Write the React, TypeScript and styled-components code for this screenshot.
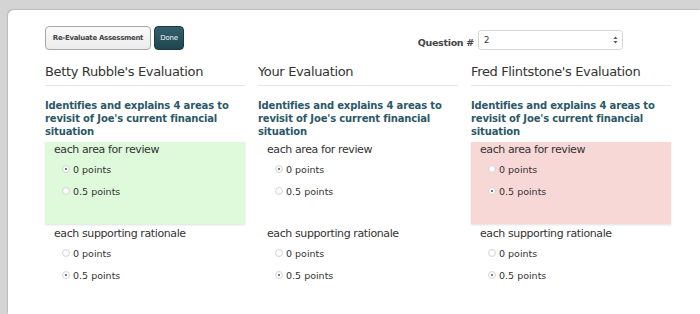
import React from 'react';
import styled, { createGlobalStyle } from 'styled-components';

const font = '"DejaVu Sans", "Liberation Sans", sans-serif';

const GlobalStyle = createGlobalStyle`
  html, body {
    margin: 0;
    padding: 0;
    background: #d4d4d4;
    overflow: hidden;
  }
  body {
    font-family: ${font};
    color: #333;
  }
`;

type Tone = 'good' | 'bad';

interface Option {
  label: string;
  checked: boolean;
}

interface Criterion {
  title: string;
  options: Option[];
}

interface Evaluation {
  name: string;
  tone?: Tone;
  criteria: Criterion[];
}

const pick = (i: number) => [
  { label: '0 points', checked: i === 0 },
  { label: '0.5 points', checked: i === 1 },
];

const evaluations: Evaluation[] = [
  {
    name: "Betty Rubble's Evaluation",
    tone: 'good',
    criteria: [
      { title: 'each area for review', options: pick(0) },
      { title: 'each supporting rationale', options: pick(1) },
    ],
  },
  {
    name: 'Your Evaluation',
    criteria: [
      { title: 'each area for review', options: pick(0) },
      { title: 'each supporting rationale', options: pick(1) },
    ],
  },
  {
    name: "Fred Flintstone's Evaluation",
    tone: 'bad',
    criteria: [
      { title: 'each area for review', options: pick(1) },
      { title: 'each supporting rationale', options: pick(1) },
    ],
  },
];

const App: React.FC = () => {
  return (
    <>
      <GlobalStyle />
      <Page>
        <Card>
          <Toolbar>
            <ButtonGroup>
              <LightButton>Re-Evaluate Assessment</LightButton>
              <DarkButton>Done</DarkButton>
            </ButtonGroup>
            <QuestionPicker>
              <QuestionLabel>Question #</QuestionLabel>
              <Select>
                <span>2</span>
                <SelectArrows>
                  <svg width="5" height="8" viewBox="0 0 5 8">
                    <path d="M2.5 0.5 L4.5 3 L0.5 3 Z M2.5 7.5 L4.5 5 L0.5 5 Z" fill="#555" />
                  </svg>
                </SelectArrows>
              </Select>
            </QuestionPicker>
          </Toolbar>
          <Columns>
            {evaluations.map((ev) => (
              <Column key={ev.name}>
                <Heading>{ev.name}</Heading>
                <Prompt>Identifies and explains 4 areas to revisit of Joe's current financial situation</Prompt>
                {ev.criteria.map((c, ci) => (
                  <CriterionBox key={c.title} $first={ci === 0} $tone={ci === 0 ? ev.tone : undefined}>
                    <CriterionTitle>{c.title}</CriterionTitle>
                    {c.options.map((o) => (
                      <RadioRow key={o.label}>
                        <Radio $checked={o.checked} />
                        <RadioLabel>{o.label}</RadioLabel>
                      </RadioRow>
                    ))}
                  </CriterionBox>
                ))}
              </Column>
            ))}
          </Columns>
        </Card>
      </Page>
    </>
  );
};

export default App;

const Page = styled.div`
  height: 314px;
  padding: 10px 0 0 8px;
  box-sizing: border-box;
  overflow: hidden;
`;

const Card = styled.div`
  width: 692px;
  height: 304px;
  background: #fff;
  border-radius: 6px 0 0 0;
  box-shadow: -1px -1px 1px rgba(0, 0, 0, 0.12);
  padding: 16px 0 0 37px;
  box-sizing: border-box;
`;

const Toolbar = styled.div`
  width: 578px;
  display: flex;
  align-items: flex-start;
  justify-content: space-between;
`;

const ButtonGroup = styled.div`
  display: flex;
  gap: 3px;
`;

const ButtonBase = styled.button`
  height: 24px;
  padding: 0;
  border-radius: 4px;
  font-family: ${font};
  font-size: 7px;
  font-weight: bold;
  white-space: nowrap;
  cursor: pointer;
`;

const LightButton = styled(ButtonBase)`
  width: 106px;
  letter-spacing: -0.3px;
  background: linear-gradient(#fafafa, #ececec);
  border: 1px solid #a8a8a8;
  color: #444;
`;

const DarkButton = styled(ButtonBase)`
  width: 30px;
  letter-spacing: -0.2px;
  background: linear-gradient(#33606b, #1f4650);
  border: 1px solid #183a42;
  color: #f2f6f7;
  font-weight: normal;
`;

const QuestionPicker = styled.div`
  display: flex;
  align-items: center;
  gap: 4px;
  margin-top: 4px;
`;

const QuestionLabel = styled.span`
  font-size: 9.5px;
  letter-spacing: -0.3px;
  font-weight: bold;
  color: #444;
  margin-top: 4px;
`;

const Select = styled.div`
  width: 145px;
  height: 20px;
  box-sizing: border-box;
  border: 1px solid #d8d8d8;
  border-radius: 3px;
  display: flex;
  align-items: center;
  justify-content: space-between;
  padding: 0 4px 0 5px;
  font-size: 8.5px;
  color: #333;
`;

const SelectArrows = styled.span`
  display: flex;
`;

const Columns = styled.div`
  display: flex;
  gap: 13px;
  margin-top: 12px;
`;

const Column = styled.div`
  width: 200px;
`;

const Heading = styled.div`
  font-size: 13px;
  letter-spacing: -0.35px;
  line-height: 20px;
  padding-bottom: 3px;
  border-bottom: 1px solid #e6e6e6;
  color: #333;
`;

const Prompt = styled.div`
  margin-top: 13px;
  font-size: 10px;
  letter-spacing: -0.15px;
  line-height: 13px;
  font-weight: bold;
  color: #2b5868;
`;

const toneColor: Record<Tone, string> = {
  good: '#dffadb',
  bad: '#f8d8d7',
};

const CriterionBox = styled.div<{ $first: boolean; $tone?: Tone }>`
  height: ${(p) => (p.$first ? '82px' : 'auto')};
  margin-top: ${(p) => (p.$first ? '4px' : '2px')};
  padding: 0 0 0 9px;
  background: ${(p) => (p.$tone ? toneColor[p.$tone] : 'transparent')};
  box-shadow: ${(p) => (p.$tone ? '0 1px 2px rgba(0,0,0,0.13)' : 'none')};
  box-sizing: border-box;
`;

const CriterionTitle = styled.div`
  font-size: 11px;
  letter-spacing: -0.4px;
  line-height: 16px;
  color: #333;
`;

const RadioRow = styled.div`
  display: flex;
  align-items: center;
  height: 22px;
  padding-left: 8px;
  gap: 3px;
`;

const Radio = styled.span<{ $checked: boolean }>`
  width: 6px;
  height: 6px;
  border-radius: 50%;
  border: 1px solid #d6d6d6;
  background: radial-gradient(circle, ${(p) => (p.$checked ? '#777 0 1px, ' : '')}#fff 1.4px, #f1f1f1 100%);
  box-sizing: content-box;
`;

const RadioLabel = styled.span`
  font-size: 9.5px;
  color: #333;
`;
